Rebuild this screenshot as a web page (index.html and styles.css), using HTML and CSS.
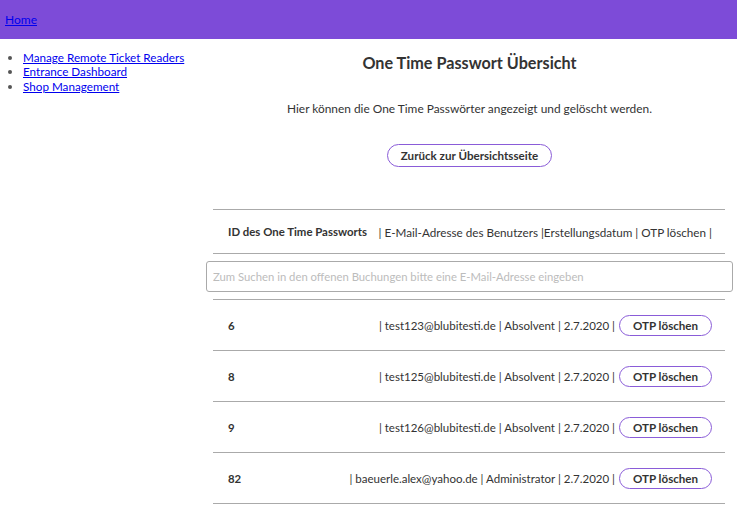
FILE: index.html
```html
<!DOCTYPE html>
<html lang="de">
<head>
<meta charset="utf-8">
<title>One Time Passwort Übersicht</title>
<link rel="stylesheet" href="styles.css">
</head>
<body>
<header class="topbar"><a class="home" href="#">Home</a></header>
<div class="layout">
  <nav class="side">
    <ul class="side-list">
      <li><a href="#">Manage Remote Ticket Readers</a></li>
      <li><a href="#">Entrance Dashboard</a></li>
      <li><a href="#">Shop Management</a></li>
    </ul>
  </nav>
  <main class="content">
    <h1 class="title">One Time Passwort Übersicht</h1>
    <p class="intro">Hier können die One Time Passwörter angezeigt und gelöscht werden.</p>
    <div class="back-wrap"><button class="pill back">Zurück zur Übersichtsseite</button></div>
    <div class="list">
      <div class="row head">
        <span class="id">ID des One Time Passworts</span>
        <span class="info">| E-Mail-Adresse des Benutzers |Erstellungsdatum | OTP löschen |</span>
      </div>
      <div class="search"><input class="search-input" type="text" placeholder="Zum Suchen in den offenen Buchungen bitte eine E-Mail-Adresse eingeben"></div>
      <div class="row">
        <span class="id">6</span>
        <span class="info">| test123@blubitesti.de | Absolvent | 2.7.2020 |</span>
        <button class="pill del">OTP löschen</button>
      </div>
      <div class="row">
        <span class="id">8</span>
        <span class="info">| test125@blubitesti.de | Absolvent | 2.7.2020 |</span>
        <button class="pill del">OTP löschen</button>
      </div>
      <div class="row">
        <span class="id">9</span>
        <span class="info">| test126@blubitesti.de | Absolvent | 2.7.2020 |</span>
        <button class="pill del">OTP löschen</button>
      </div>
      <div class="row">
        <span class="id">82</span>
        <span class="info">| baeuerle.alex@yahoo.de | Administrator | 2.7.2020 |</span>
        <button class="pill del">OTP löschen</button>
      </div>
    </div>
  </main>
</div>
</body>
</html>
```
FILE: styles.css
```css
html, body {
  margin: 0;
  padding: 0;
  background: #fff;
}
body {
  font-family: Lato, "Open Sans", sans-serif;
  color: #333;
  font-size: 12px;
}
.topbar {
  background: #7d4bd8;
  height: 39px;
  display: flex;
  align-items: center;
  padding: 0 5px;
  box-sizing: border-box;
}
.home {
  color: #0000ee;
  font-size: 12px;
}
.layout {
  display: flex;
}
.side {
  width: 206px;
  flex: none;
}
.side-list {
  margin: 11px 0 0 0;
  padding-left: 23px;
  line-height: 14.4px;
  font-size: 11.7px;
}
.side-list li::marker {
  color: #555;
}
.side-list a {
  color: #0000ee;
}
.content {
  width: 527px;
  display: flex;
  flex-direction: column;
}
.title {
  margin: 15px 0 0;
  font-size: 16.2px;
  line-height: 18px;
  font-weight: 700;
  text-align: center;
  color: #333;
}
.intro {
  margin: 29px 0 0;
  font-size: 11.9px;
  line-height: 16px;
  text-align: center;
}
.back-wrap {
  margin-top: 27px;
  display: flex;
  justify-content: center;
}
.pill {
  font-family: inherit;
  background: #fff;
  border: 1px solid #8a5cd8;
  color: #333;
  font-weight: 700;
  font-size: 11.6px;
  border-radius: 12px;
  padding: 0;
  cursor: pointer;
}
.back {
  width: 165px;
  height: 23px;
}
.list {
  margin-top: 42px;
  display: flex;
  flex-direction: column;
}
.row {
  margin: 0 8px 0 7px;
  height: 50px;
  border-bottom: 1px solid #aaa;
  display: flex;
  align-items: center;
  padding: 0 13px 0 15px;
  white-space: nowrap;
  gap: 10px;
}
.row.head {
  height: 43px;
  border-top: 1px solid #aaa;
}
.id {
  font-weight: 700;
  font-size: 11.4px;
  flex: none;
}
.info {
  flex: 1;
  min-width: 0;
  text-align: right;
  font-size: 11.5px;
}
.head .info {
  font-size: 11.7px;
}
.del {
  flex: none;
  width: 93px;
  height: 21px;
  border-radius: 11px;
  margin-left: -6px;
}
.search {
  padding: 7px 0;
}
.search-input {
  display: block;
  width: 100%;
  box-sizing: border-box;
  height: 31px;
  border: 1px solid #aaa;
  border-radius: 3px;
  padding: 0 6px;
  font-family: inherit;
  font-size: 11.3px;
  color: #333;
}
.search-input::placeholder {
  color: #bcbcbc;
}
.search + .row {
  border-top: 1px solid #aaa;
}
```
